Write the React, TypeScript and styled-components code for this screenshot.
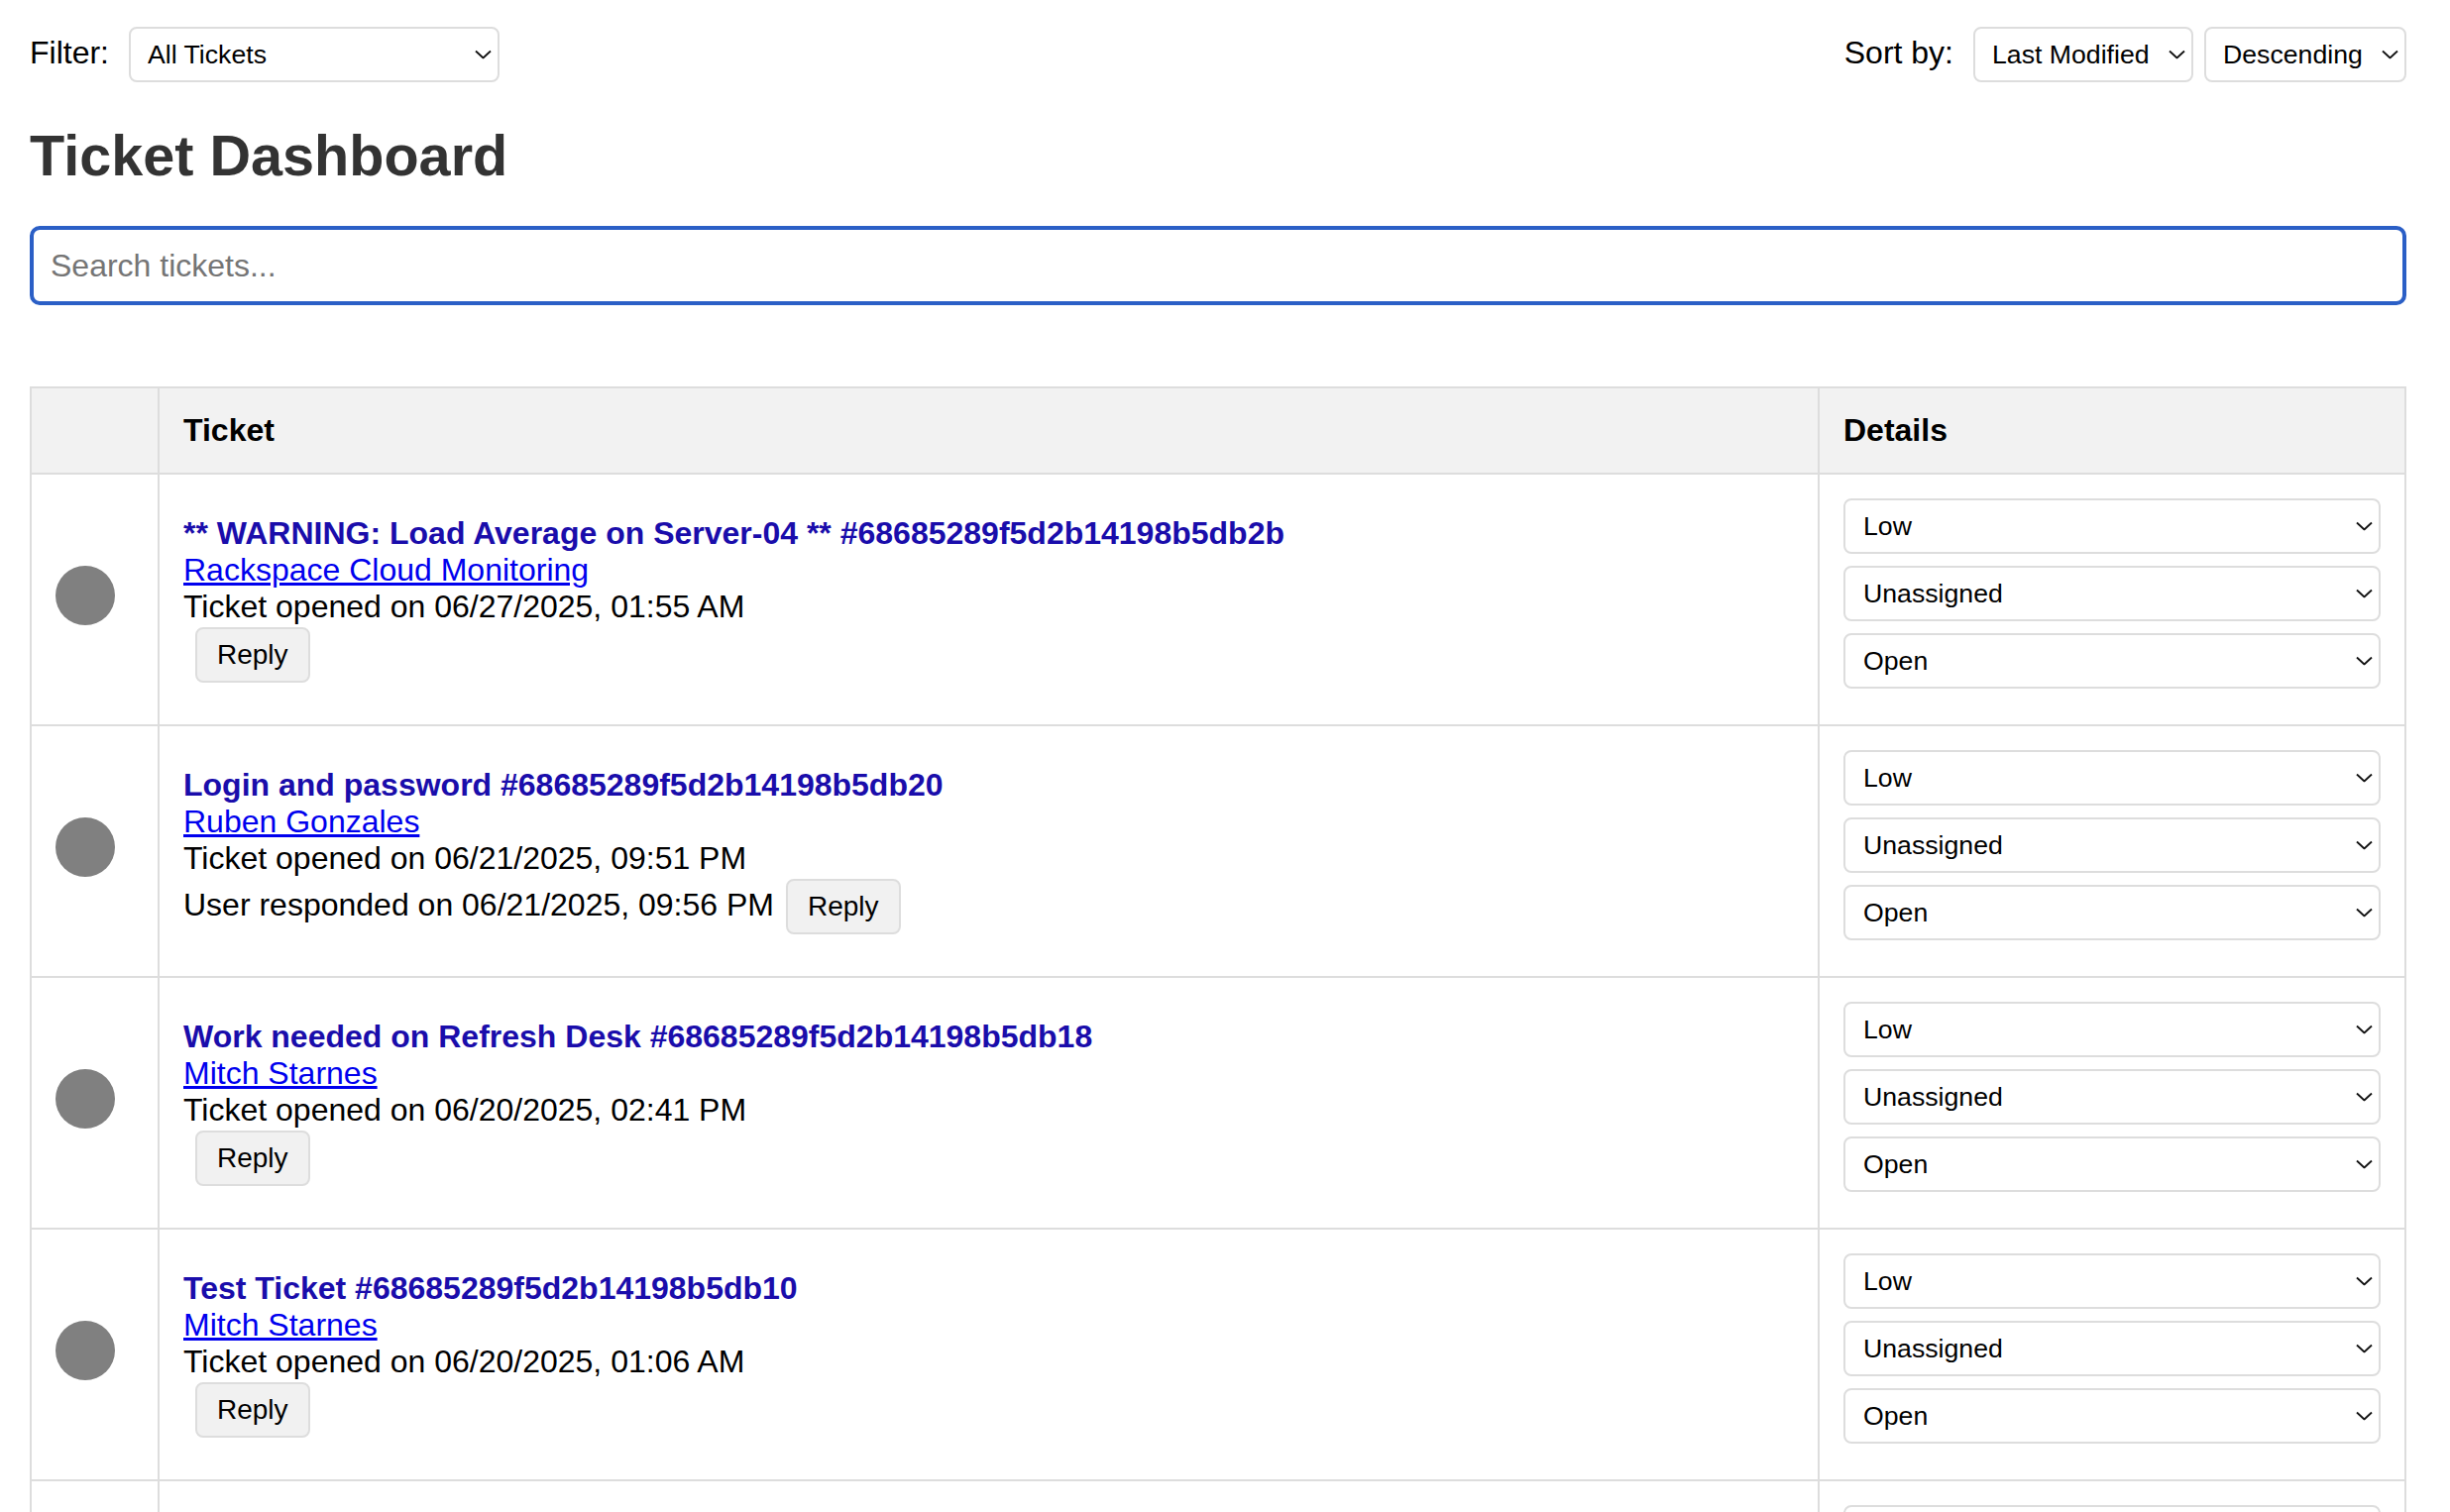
import styled, { createGlobalStyle } from 'styled-components'
import type { ReactNode } from 'react'

interface Ticket {
    id: string
    subject: string
    requester: string
    opened: string
    responded?: string
}

const tickets: Ticket[] = [
    {
        id: '68685289f5d2b14198b5db2b',
        subject: '** WARNING: Load Average on Server-04 **',
        requester: 'Rackspace Cloud Monitoring',
        opened: '06/27/2025, 01:55 AM',
    },
    {
        id: '68685289f5d2b14198b5db20',
        subject: 'Login and password',
        requester: 'Ruben Gonzales',
        opened: '06/21/2025, 09:51 PM',
        responded: '06/21/2025, 09:56 PM',
    },
    {
        id: '68685289f5d2b14198b5db18',
        subject: 'Work needed on Refresh Desk',
        requester: 'Mitch Starnes',
        opened: '06/20/2025, 02:41 PM',
    },
    {
        id: '68685289f5d2b14198b5db10',
        subject: 'Test Ticket',
        requester: 'Mitch Starnes',
        opened: '06/20/2025, 01:06 AM',
    },
    {
        id: '68685289f5d2b14198b5db08',
        subject: 'Printer not responding',
        requester: 'Mitch Starnes',
        opened: '06/19/2025, 10:12 AM',
    },
]

// native select with the chevron drawn on top
const Dropdown = ({ width, gap, block, value, children }: {
    width?: number
    gap?: number
    block?: boolean
    value: string
    children: ReactNode
}) => (
    <SelectWrap $width={width} $gap={gap} $block={block}>
        <Select defaultValue={value} $block={block}>{children}</Select>
        <Chevron width="17" height="9" viewBox="0 0 17 9">
            <path d="M1 1 L8.5 8 L16 1" fill="none" stroke="#111" strokeWidth="1.8" />
        </Chevron>
    </SelectWrap>
)

const App = () => {
    return <Page>
        <GlobalStyle />
        <TopBar>
            <Group>
                <Label>Filter:</Label>
                <Dropdown width={374} value="all">
                    <option value="all">All Tickets</option>
                    <option value="open">Open</option>
                    <option value="closed">Closed</option>
                </Dropdown>
            </Group>
            <Group>
                <Label>Sort by:</Label>
                <Dropdown width={222} value="modified">
                    <option value="modified">Last Modified</option>
                    <option value="created">Created</option>
                </Dropdown>
                <Dropdown width={204} gap={11} value="desc">
                    <option value="desc">Descending</option>
                    <option value="asc">Ascending</option>
                </Dropdown>
            </Group>
        </TopBar>

        <Title>Ticket Dashboard</Title>
        <Search placeholder="Search tickets..." />

        <Table>
            <colgroup>
                <Col $width={129} />
                <col />
                <Col $width={592} />
            </colgroup>
            <thead>
                <tr>
                    <Th></Th>
                    <Th>Ticket</Th>
                    <Th>Details</Th>
                </tr>
            </thead>
            <tbody>
                {tickets.map(t => (
                    <tr key={t.id}>
                        <Td>
                            <Dot />
                        </Td>
                        <Td>
                            <Subject href="#">{t.subject} #{t.id}</Subject>
                            <div><Requester href="#">{t.requester}</Requester></div>
                            <div>Ticket opened on {t.opened}</div>
                            <div>
                                {t.responded && <span>User responded on {t.responded}</span>}
                                <ReplyButton>Reply</ReplyButton>
                            </div>
                        </Td>
                        <Td>
                            <Dropdown block value="low">
                                <option value="low">Low</option>
                                <option value="medium">Medium</option>
                                <option value="high">High</option>
                            </Dropdown>
                            <Dropdown block value="none">
                                <option value="none">Unassigned</option>
                                <option value="mitch">Mitch Starnes</option>
                            </Dropdown>
                            <Dropdown block value="open">
                                <option value="open">Open</option>
                                <option value="pending">Pending</option>
                                <option value="closed">Closed</option>
                            </Dropdown>
                        </Td>
                    </tr>
                ))}
            </tbody>
        </Table>
    </Page>
}

export default App

const GlobalStyle = createGlobalStyle`
    body {
        margin: 0;
        background: #fff;
        font-family: "Liberation Sans", Arial, sans-serif;
        color: #000;
    }
`
const Page = styled.div`
    padding: 27px 44px 0 30px;
    font-size: 32px;
`
const TopBar = styled.div`
    display: flex;
    justify-content: space-between;
    align-items: baseline;
    padding-bottom: 2px;
`
const Group = styled.div`
    display: flex;
    align-items: baseline;
`
const Label = styled.label`
    font-size: 32px;
    margin-right: 20px;
`
const SelectWrap = styled.div<{ $width?: number; $gap?: number; $block?: boolean }>`
    position: relative;
    display: ${p => (p.$block ? 'block' : 'inline-block')};
    width: ${p => (p.$width ? `${p.$width}px` : 'auto')};
    margin-left: ${p => p.$gap || 0}px;
    margin-bottom: ${p => (p.$block ? 12 : 0)}px;
`
const Select = styled.select<{ $block?: boolean }>`
    appearance: none;
    box-sizing: border-box;
    display: block;
    width: 100%;
    height: 56px;
    padding: 0 34px 0 ${p => (p.$block ? 18 : 17)}px;
    font-family: "Liberation Sans", Arial, sans-serif;
    font-size: 26.67px;
    color: #000;
    background: #fff;
    border: 2px solid #ddd;
    border-radius: 8px;
    outline: none;
`
const Chevron = styled.svg`
    position: absolute;
    right: 8px;
    top: 50%;
    transform: translateY(-50%);
    pointer-events: none;
`
const Title = styled.h1`
    font-size: 57.6px;
    margin: 38.6px 0;
    color: #333;
`
const Search = styled.input`
    box-sizing: border-box;
    display: block;
    width: 100%;
    height: 80px;
    padding: 0 17px;
    font-family: "Liberation Sans", Arial, sans-serif;
    font-size: 32px;
    border: 4px solid #2b5fc6;
    border-radius: 10px;
    outline: none;
    margin-bottom: 82px;
    &::placeholder {
        color: #757575;
    }
`
const Table = styled.table`
    width: 100%;
    border-collapse: collapse;
    table-layout: fixed;
`
const Col = styled.col<{ $width: number }>`
    width: ${p => p.$width}px;
`
const Th = styled.th`
    background: #f2f2f2;
    text-align: left;
    padding: 24px;
    border: 2px solid #ddd;
    font-size: 32px;
`
const Td = styled.td`
    padding: 24px;
    border: 2px solid #ddd;
    vertical-align: middle;
`
const Dot = styled.span`
    display: inline-block;
    width: 60px;
    height: 60px;
    border-radius: 50%;
    background: #808080;
`
const Subject = styled.a`
    display: block;
    font-weight: bold;
    color: #1a0dab;
    text-decoration: none;
`
const Requester = styled.a`
    color: #0000ee;
    text-decoration: underline;
`
const ReplyButton = styled.button`
    font-family: "Liberation Sans", Arial, sans-serif;
    font-size: 28px;
    padding: 10px 20px;
    margin: 2px 0 2px 12px;
    border: 2px solid #ddd;
    border-radius: 8px;
    background: #f1f1f1;
    color: #000;
`
